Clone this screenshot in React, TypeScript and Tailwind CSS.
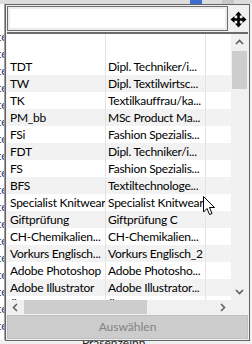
import React from "react";

const rows: [string, string][] = [
  ["TDT", "Dipl. Techniker/i..."],
  ["TW", "Dipl. Textilwirtsc..."],
  ["TK", "Textilkauffrau/ka..."],
  ["PM_bb", "MSc Product Ma..."],
  ["FSi", "Fashion Spezialis..."],
  ["FDT", "Dipl. Techniker/i..."],
  ["FS", "Fashion Spezialis..."],
  ["BFS", "Textiltechnologe..."],
  ["Specialist Knitwear", "Specialist Knitwear"],
  ["Giftprüfung", "Giftprüfung C"],
  ["CH-Chemikalien...", "CH-Chemikalien..."],
  ["Vorkurs Englisch...", "Vorkurs Englisch_2"],
  ["Adobe Photoshop", "Adobe Photosho..."],
  ["Adobe Illustrator", "Adobe Illustrator..."],
  ["Änderungen...", "Änderungen..."],
];

function MoveIcon() {
  return (
    <svg width="17" height="17" viewBox="0 0 17 17">
      <path d="M8.5 0.5 L12 4.5 H9.8 V7.2 H12.5 V5 L16.5 8.5 L12.5 12 V9.8 H9.8 V12.5 H12 L8.5 16.5 L5 12.5 H7.2 V9.8 H4.5 V12 L0.5 8.5 L4.5 5 V7.2 H7.2 V4.5 H5 Z" fill="#000" />
    </svg>
  );
}

function Chevron({ dir }: { dir: "up" | "down" | "left" | "right" }) {
  const d = {
    up: "M1 6 L4.5 2.5 L8 6",
    down: "M1 3 L4.5 6.5 L8 3",
    left: "M6 1 L2.5 4.5 L6 8",
    right: "M3 1 L6.5 4.5 L3 8",
  }[dir];
  return (
    <svg width="9" height="9" viewBox="0 0 9 9">
      <path d={d} fill="none" stroke="#606060" strokeWidth="1.6" />
    </svg>
  );
}

function Cursor() {
  return (
    <svg width="13" height="20" viewBox="0 0 13 20">
      <path d="M0.5 0.5 V16 L4 12.5 L6.5 18.5 L9 17.5 L6.5 11.5 H11.5 Z" fill="#fff" stroke="#000" strokeWidth="1" strokeLinejoin="miter" />
    </svg>
  );
}

export default function App() {
  const font = { fontFamily: 'Lato, "Noto Sans", sans-serif' };
  return (
    <div className="relative w-[252px] h-[344px] overflow-hidden bg-[#f0f0f0]" style={font}>
      {/* background app */}
      <div className="flex flex-col w-full h-full">
        <div className="h-[4px] bg-[#dcdcdc] flex gap-[20px] pl-[190px]">
          <div className="w-[12px] h-[4px] bg-[#3b6fd1]" />
          <div className="w-[12px] h-[4px] bg-[#c8c8c8]" />
        </div>
        <div className="flex-1 flex">
          <div className="w-[5px] bg-white border-r border-[#a0a0a0] overflow-hidden flex flex-col pt-[24px]">
            {Array.from({ length: 18 }).map((_, i) => (
              <div key={i} className="h-[17px] leading-[17px] text-[12px] text-[#1f3b7a] -ml-[3px]">te</div>
            ))}
          </div>
          <div className="flex-1" />
        </div>
        <div className="h-[4px] relative">
          <div className="absolute left-[82px] -top-[4px] text-[12px] leading-[14px] text-[#222]">Präsenzeinh</div>
        </div>
      </div>

      {/* popup */}
      <div className="absolute left-[5px] top-[4px] w-[245px] h-[337px] border border-[#646464] bg-[#f0f0f0] flex flex-col">
        <div className="flex items-start h-[27px] pl-[1px] pt-[1px]">
          <div className="w-[221px] h-[25px] border border-[#6d6d6d] bg-[#ececec] p-[2px]">
            <div className="w-full h-full bg-white" />
          </div>
          <div className="flex-1 flex justify-center items-center pt-[5px]">
            <MoveIcon />
          </div>
        </div>
        <div className="flex-1 flex flex-col border-t-2 border-[#6a6a6a] mx-[1px] bg-white overflow-hidden">
          <div className="flex-1 flex min-h-0">
            <div className="flex-1 flex flex-col overflow-hidden">
              <div className="h-[24px] shrink-0 flex">
                <div className="w-[99px] border-r border-[#e3e3e3]" />
                <div className="w-[100px] border-r border-[#e3e3e3]" />
              </div>
              {rows.map(([a, b], i) => (
                <div key={i} className={`h-[17px] shrink-0 flex text-[12px] tracking-[-0.25px] leading-[17px] text-black ${i % 2 === 1 ? "bg-[#f2f2f2]" : "bg-white"}`}>
                  <div className="w-[99px] pl-[3px] border-r border-[#e3e3e3] whitespace-nowrap overflow-hidden">{a}</div>
                  <div className="w-[100px] pl-[2px] border-r border-[#e3e3e3] whitespace-nowrap overflow-hidden">{b}</div>
                  <div className="flex-1" />
                </div>
              ))}
            </div>
            <div className="w-[17px] bg-[#f0f0f0] flex flex-col items-center">
              <div className="h-[17px] flex items-center justify-center"><Chevron dir="up" /></div>
              <div className="w-[15px] h-[38px] bg-[#cdcdcd]" />
              <div className="flex-1" />
              <div className="h-[17px] flex items-center justify-center"><Chevron dir="down" /></div>
            </div>
          </div>
          <div className="h-[14px] flex bg-[#f0f0f0]">
            <div className="w-[17px] flex items-center justify-center"><Chevron dir="left" /></div>
            <div className="w-[123px] h-[14px] bg-[#cdcdcd]" />
            <div className="flex-1" />
            <div className="w-[17px] flex items-center justify-center"><Chevron dir="right" /></div>
            <div className="w-[17px]" />
          </div>
        </div>
        <div className="h-[24px] mt-[1px] mx-[1px] mb-[1px] border border-[#bfbfbf] bg-[#cccccc] flex items-center justify-center text-[12px] text-[#838383]">
          Auswählen
        </div>
      </div>

      <div className="absolute left-[203px] top-[196px]">
        <Cursor />
      </div>
    </div>
  );
}
